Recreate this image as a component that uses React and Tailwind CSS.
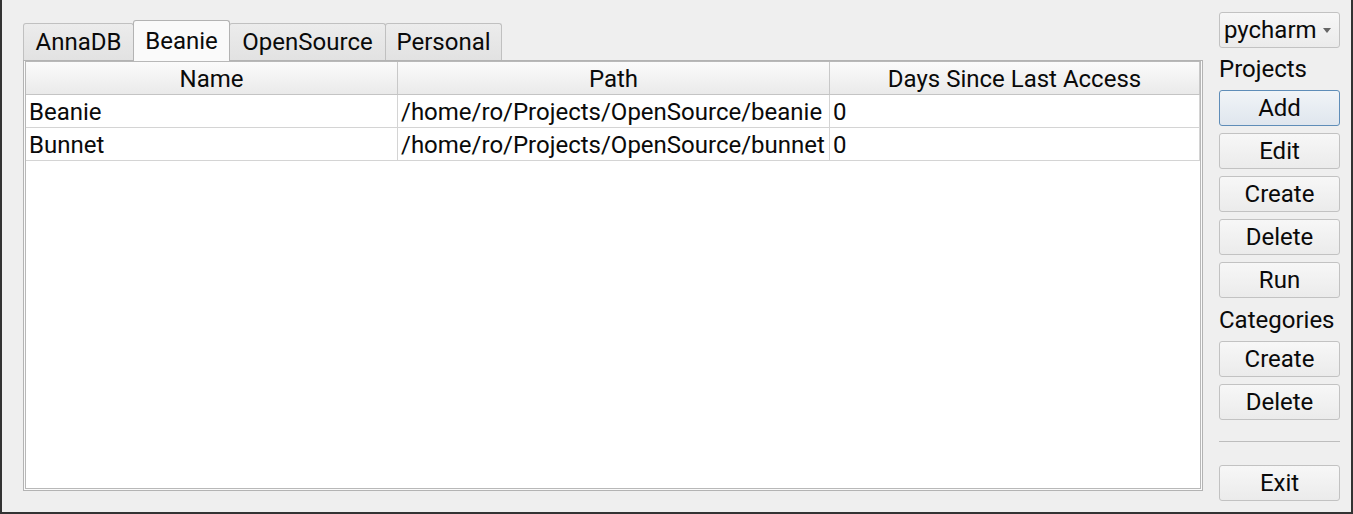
import React from "react";

const tabs = [
  { name: "AnnaDB", w: "w-[111px]" },
  { name: "Beanie", w: "w-[97px]", active: true },
  { name: "OpenSource", w: "w-[157px]" },
  { name: "Personal", w: "w-[117px]" },
];

const rows = [
  { name: "Beanie", path: "/home/ro/Projects/OpenSource/beanie", days: "0" },
  { name: "Bunnet", path: "/home/ro/Projects/OpenSource/bunnet", days: "0" },
];

const Btn = ({ children, focused }) => (
  <button
    className={
      "h-[36px] w-full rounded-[3px] border text-[24px] leading-none text-[#0a0a0a] " +
      (focused
        ? "border-[#5f8db8] bg-gradient-to-b from-[#f1f4f7] to-[#dfe6ee]"
        : "border-[#c2c2c2] bg-gradient-to-b from-[#f7f7f7] to-[#ebebeb]")
    }
  >
    {children}
  </button>
);

export default function App() {
  return (
    <div
      className="w-[1353px] h-[514px] bg-[#efefef] border-x-2 border-b-2 border-[#333333] flex text-[#0a0a0a]"
      style={{ fontFamily: "Roboto, 'Liberation Sans', sans-serif" }}
    >
      {/* left: tab widget */}
      <div className="flex flex-col ml-[21px] mt-[20px] mb-[21px] w-[1180px]">
        <div className="flex items-end h-[40px] relative z-10">
          {tabs.map((t, i) => (
            <div
              key={t.name}
              className={
                `${t.w} border border-b-0 rounded-t-[3px] flex items-center justify-center text-[24px] ` +
                (i > 0 ? "-ml-[1px] " : "") +
                (t.active
                  ? "h-[41px] -mb-[1px] border-[#b3b3b3] bg-[#fafafa] relative z-10"
                  : "h-[37px] border-[#c0c0c0] bg-gradient-to-b from-[#ececec] to-[#e2e2e2]")
              }
            >
              {t.name}
            </div>
          ))}
        </div>
        <div className="flex-1 border border-[#b3b3b3] bg-[#fafafa] px-[1px] pb-[1px]">
          <div className="h-full border border-[#b8b8b8] bg-white flex flex-col">
            <div className="flex h-[33px] bg-gradient-to-b from-[#fbfbfb] to-[#eaeaea] border-b border-[#c4c4c4] text-[24px]">
              <div className="w-[372px] border-r border-[#c8c8c8] flex items-center justify-center pt-[2px]">Name</div>
              <div className="w-[432px] border-r border-[#c8c8c8] flex items-center justify-center pt-[2px]">Path</div>
              <div className="flex-1 border-r border-[#c8c8c8] flex items-center justify-center pt-[2px]">Days Since Last Access</div>
            </div>
            {rows.map((r) => (
              <div key={r.name} className="flex h-[33px] border-b border-[#d4d4d4] text-[24px]">
                <div className="w-[372px] border-r border-[#d4d4d4] flex items-center pl-[3px] pt-[2px]">{r.name}</div>
                <div className="w-[432px] border-r border-[#d4d4d4] flex items-center pl-[3px] pt-[2px] whitespace-nowrap overflow-hidden">{r.path}</div>
                <div className="flex-1 border-r border-[#d4d4d4] flex items-center pl-[3px] pt-[2px]">{r.days}</div>
              </div>
            ))}
          </div>
        </div>
      </div>

      {/* right: controls */}
      <div className="ml-[16px] w-[121px] flex flex-col pt-[12px]">
        <div className="h-[36px] rounded-[3px] border border-[#c2c2c2] bg-gradient-to-b from-[#f7f7f7] to-[#ebebeb] flex items-center pl-[4px] pr-[8px] text-[24px]">
          <span className="flex-1">pycharm</span>
          <svg width="8" height="5" viewBox="0 0 8 5">
            <path d="M0 0 L8 0 L4 5 Z" fill="#666" />
          </svg>
        </div>
        <div className="h-[42px] flex items-center text-[24px]">Projects</div>
        <div className="flex flex-col gap-[7px]">
          <Btn focused>Add</Btn>
          <Btn>Edit</Btn>
          <Btn>Create</Btn>
          <Btn>Delete</Btn>
          <Btn>Run</Btn>
        </div>
        <div className="h-[43px] flex items-center text-[24px]">Categories</div>
        <div className="flex flex-col gap-[7px]">
          <Btn>Create</Btn>
          <Btn>Delete</Btn>
        </div>
        <div className="mt-[21px] h-[1px] bg-[#bdbdbd]" />
        <div className="mt-[23px]">
          <Btn>Exit</Btn>
        </div>
      </div>
    </div>
  );
}
